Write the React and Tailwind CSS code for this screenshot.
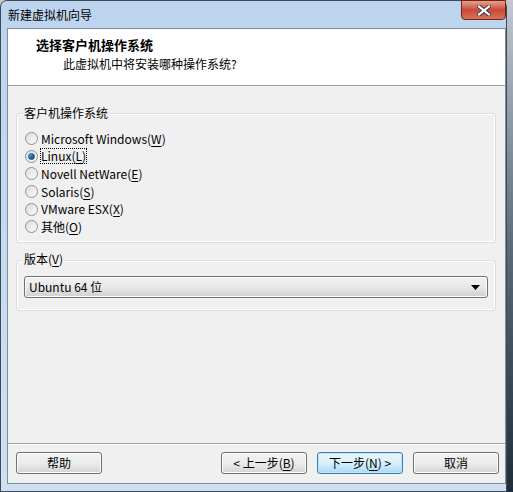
import React from 'react';

const FONT = { fontFamily: '"Noto Sans CJK SC", "Noto Sans", sans-serif' };

function Radio({ checked }) {
  return (
    <span className="w-[13px] h-[13px] rounded-full border border-[#8f9194] bg-gradient-to-br from-[#dcdcdc] to-[#fbfbfb] flex items-center justify-center shrink-0">
      {checked && (
        <span className="w-[7px] h-[7px] rounded-full bg-gradient-to-br from-[#7cc0f2] via-[#1f6fb8] to-[#0c3f7a] border border-[#1d4f86]" />
      )}
    </span>
  );
}

function Mn({ children }) {
  return <span className="underline underline-offset-2">{children}</span>;
}

function Btn({ children, primary }) {
  return (
    <div
      className={
        'w-[86px] h-[22px] rounded-[3px] border flex items-center justify-center text-[12px] text-black ' +
        (primary
          ? 'border-[#3c7fb1] bg-gradient-to-b from-[#eaf6fd] via-[#d9f0fc] to-[#a7d9f5] shadow-[inset_0_0_0_1px_#bfe3f8]'
          : 'border-[#707070] bg-gradient-to-b from-[#f3f3f3] via-[#ebebeb] to-[#d4d4d4] shadow-[inset_0_0_0_1px_#fcfcfc]')
      }
    >
      {children}
    </div>
  );
}

export default function App() {
  const options = [
    { label: 'Microsoft Windows', key: 'W' },
    { label: 'Linux', key: 'L', checked: true },
    { label: 'Novell NetWare', key: 'E' },
    { label: 'Solaris', key: 'S' },
    { label: 'VMware ESX', key: 'X' },
    { label: '其他', key: 'O' },
  ];

  return (
    <div className="w-[513px] h-[492px] overflow-hidden bg-gradient-to-b from-[#c3c9cf] via-[#5a6b7c] to-[#1f2e3d]" style={FONT}>
      <div className="relative w-[507px] h-[492px] rounded-t-[7px] border border-[#3d4a58] bg-gradient-to-b from-[#bcd4ee] to-[#cfe0f2] flex flex-col">
        {/* title bar */}
        <div className="h-[27px] flex items-center pl-[7px] text-[12px] text-black">
          新建虚拟机向导
        </div>
        <div className="absolute top-[-1px] right-[0px] w-[45px] h-[20px] rounded-b-[4px] border border-[#6b2418] bg-gradient-to-b from-[#e8a08e] via-[#c8493a] to-[#d8705a] flex items-center justify-center">
          <svg width="14" height="11" viewBox="0 0 14 11">
            <path d="M2 1.5 L12 9.5 M12 1.5 L2 9.5" stroke="#3d3d3d" strokeWidth="4.2" strokeLinecap="square" />
            <path d="M2 1.5 L12 9.5 M12 1.5 L2 9.5" stroke="#ffffff" strokeWidth="2.2" strokeLinecap="square" />
          </svg>
        </div>

        {/* client */}
        <div className="ml-[6px] flex-1 border border-[#7f8e9e] bg-[#f0f0f0] flex flex-col text-[12px] text-black">
          <div className="h-[57px] bg-white border-b border-[#a0a0a0] flex flex-col">
            <div className="pl-[28px] pt-[7px] text-[13px] font-bold leading-[18px]">选择客户机操作系统</div>
            <div className="pl-[55px] pt-[1px] leading-[18px]">此虚拟机中将安装哪种操作系统?</div>
          </div>

          <div className="px-[8px] pt-[19px] flex flex-col">
            {/* group 1 */}
            <div className="relative w-[480px] h-[130px] rounded-[3px] border border-[#d5dfe5] shadow-[inset_0_0_0_1px_#ffffff] mt-[8px]">
              <div className="absolute left-[6px] top-[-10px] px-[1px] bg-[#f0f0f0] leading-[18px]">客户机操作系统</div>
              <div className="pt-[16px] pl-[8px] flex flex-col">
                {options.map((o) => (
                  <div key={o.key} className="h-[17.6px] flex items-center gap-[2px]">
                    <Radio checked={o.checked} />
                    <span
                      className={
                        'leading-[16px] ' +
                        (o.checked ? 'outline outline-1 outline-dotted outline-black -outline-offset-1 px-[1px]' : 'px-[1px]')
                      }
                    >
                      {o.label}(<Mn>{o.key}</Mn>)
                    </span>
                  </div>
                ))}
              </div>
            </div>

            {/* group 2 */}
            <div className="relative w-[480px] h-[51px] rounded-[3px] border border-[#d5dfe5] shadow-[inset_0_0_0_1px_#ffffff] mt-[17px]">
              <div className="absolute left-[6px] top-[-11px] px-[1px] bg-[#f0f0f0] leading-[18px]">
                版本(<Mn>V</Mn>)
              </div>
              <div className="mt-[15px] ml-[7px] w-[464px] h-[22px] rounded-[3px] border border-[#707070] bg-gradient-to-b from-[#f2f2f2] via-[#e8e8e8] to-[#d0d0d0] shadow-[inset_0_0_0_1px_#fbfbfb] flex items-center justify-between pl-[4px] pr-[7px]">
                <span>Ubuntu 64 位</span>
                <svg width="9" height="5" viewBox="0 0 9 5">
                  <path d="M0 0 H9 L4.5 5 Z" fill="#000" />
                </svg>
              </div>
            </div>
          </div>

          <div className="flex-1" />
          <div className="border-t border-[#a0a0a0] shadow-[0_1px_0_#ffffff]" />
          <div className="h-[39px] flex items-center pl-[8px] pb-[1px]">
            <Btn>帮助</Btn>
            <div className="w-[119px]" />
            <Btn>&lt; 上一步(<Mn>B</Mn>)</Btn>
            <div className="w-[10px]" />
            <Btn primary>
              下一步(<Mn>N</Mn>) &gt;
            </Btn>
            <div className="w-[10px]" />
            <Btn>取消</Btn>
          </div>
        </div>
        <div className="h-[7px]" />
      </div>
    </div>
  );
}
